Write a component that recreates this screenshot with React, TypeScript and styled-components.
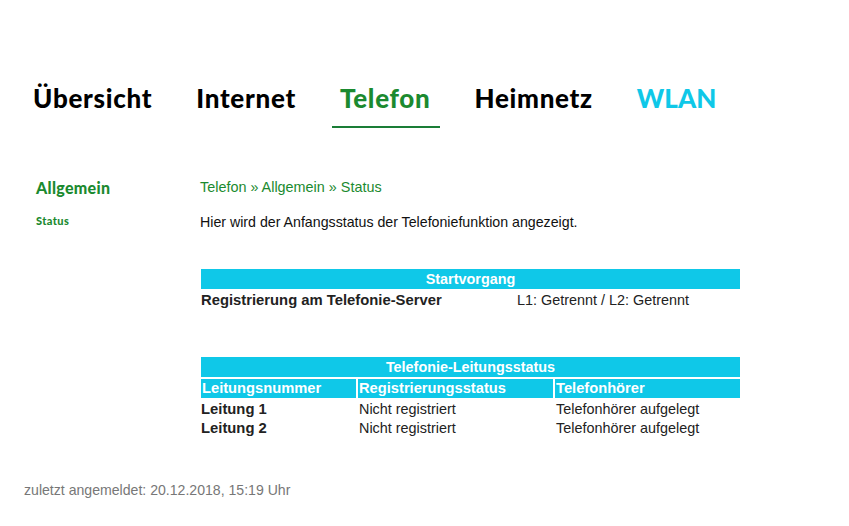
import React from "react";
import styled, { createGlobalStyle } from "styled-components";

const GREEN = "#1b8a2f";
const CYAN = "#0fc8e8";

const Global = createGlobalStyle`
  html, body { margin: 0; padding: 0; background: #fff; }
  body { font-family: "Liberation Sans", Arial, sans-serif; }
`;

const Page = styled.div`
  width: 849px;
  height: 526px;
  position: relative;
  overflow: hidden;
`;

const Nav = styled.nav`
  display: flex;
  gap: 27px;
  padding: 79px 0 0 25px;
`;

const NavItem = styled.div<{ $active?: boolean; $color?: string; $ls?: number }>`
  font-family: Lato, "Noto Sans", sans-serif;
  font-weight: 900;
  font-size: 26px;
  letter-spacing: ${(p) => (p.$ls ?? 0.7)}px;
  line-height: 38px;
  padding: 0 9px 9px 8px;
  color: ${(p) => p.$color || "#000"};
  border-bottom: 2px solid ${(p) => (p.$active ? "#1a7d36" : "transparent")};
`;

const Main = styled.div`
  display: flex;
  padding: 49px 0 0 36px;
`;

const Sidebar = styled.aside`
  width: 164px;
  display: flex;
  flex-direction: column;
  gap: 15px;
  font-family: Lato, "Noto Sans", sans-serif;
  font-weight: 900;
  color: ${GREEN};
`;

const SideHead = styled.div`
  font-size: 16px;
  letter-spacing: 0.3px;
  line-height: 22px;
`;

const SideLink = styled.div`
  font-size: 11px;
  letter-spacing: 0.4px;
  line-height: 14px;
`;

const Content = styled.section`
  flex: 1;
  display: flex;
  flex-direction: column;
`;

const Crumb = styled.div`
  font-size: 14.4px;
  line-height: 20px;
  color: ${GREEN};
`;

const Desc = styled.div`
  font-size: 14.2px;
  line-height: 18px;
  color: #111;
  margin-top: 16px;
`;

const Table = styled.div<{ $mt: number }>`
  margin-top: ${(p) => p.$mt}px;
  margin-left: 1px;
  width: 539px;
  display: grid;
  grid-template-columns: 155px 195px 1fr;
  column-gap: 2px;
  font-size: 14.4px;
  color: #222;
`;

const TitleCell = styled.div`
  grid-column: 1 / -1;
  background: ${CYAN};
  color: #fff;
  font-weight: bold;
  text-align: center;
  font-size: 14.4px;
  line-height: 20px;
  margin-bottom: 2px;
`;

const HeadCell = styled.div`
  background: ${CYAN};
  color: #fff;
  font-weight: bold;
  font-size: 14.7px;
  line-height: 19px;
  padding-left: 1px;
  margin-bottom: 2px;
`;

const Cell = styled.div<{ $bold?: boolean }>`
  font-weight: ${(p) => (p.$bold ? "bold" : "normal")};
  font-size: ${(p) => (p.$bold ? 14.8 : 14.4)}px;
  line-height: 19px;
  padding-left: ${(p) => (p.$bold ? 0 : 1)}px;
`;

const RowTwo = styled.div`
  grid-column: 1 / -1;
  display: grid;
  grid-template-columns: 315px 1fr;
`;

const Footer = styled.div`
  position: absolute;
  left: 24px;
  top: 481px;
  font-size: 14.1px;
  line-height: 18px;
  color: #777;
`;

export default function App() {
  return (
    <Page>
      <Global />
      <Nav>
        <NavItem>Übersicht</NavItem>
        <NavItem>Internet</NavItem>
        <NavItem $active $color={GREEN}>Telefon</NavItem>
        <NavItem>Heimnetz</NavItem>
        <NavItem $color={CYAN} $ls={0}>WLAN</NavItem>
      </Nav>
      <Main>
        <Sidebar>
          <SideHead>Allgemein</SideHead>
          <SideLink>Status</SideLink>
        </Sidebar>
        <Content>
          <Crumb>Telefon » Allgemein » Status</Crumb>
          <Desc>Hier wird der Anfangsstatus der Telefoniefunktion angezeigt.</Desc>
          <Table $mt={38}>
            <TitleCell>Startvorgang</TitleCell>
            <RowTwo>
              <Cell $bold>Registrierung am Telefonie-Server</Cell>
              <Cell>L1: Getrennt / L2: Getrennt</Cell>
            </RowTwo>
          </Table>
          <Table $mt={47}>
            <TitleCell>Telefonie-Leitungsstatus</TitleCell>
            <HeadCell>Leitungsnummer</HeadCell>
            <HeadCell>Registrierungsstatus</HeadCell>
            <HeadCell>Telefonhörer</HeadCell>
            <Cell $bold>Leitung 1</Cell>
            <Cell>Nicht registriert</Cell>
            <Cell>Telefonhörer aufgelegt</Cell>
            <Cell $bold>Leitung 2</Cell>
            <Cell>Nicht registriert</Cell>
            <Cell>Telefonhörer aufgelegt</Cell>
          </Table>
        </Content>
      </Main>
      <Footer>zuletzt angemeldet: 20.12.2018, 15:19 Uhr</Footer>
    </Page>
  );
}
